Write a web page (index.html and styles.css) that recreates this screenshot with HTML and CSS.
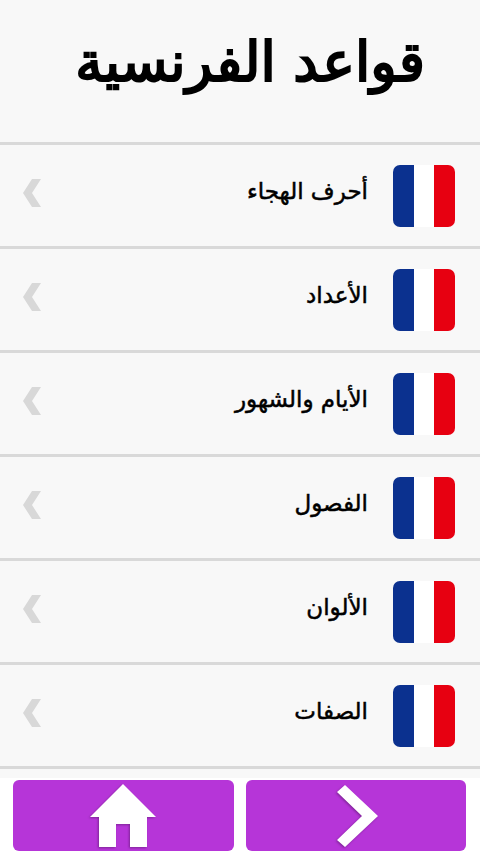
FILE: index.html
```
<!DOCTYPE html>
<html lang="ar" dir="rtl">
<head>
<meta charset="UTF-8">
<meta name="viewport" content="width=device-width, initial-scale=1.0">
<title>قواعد الفرنسية</title>
<link rel="stylesheet" href="styles.css">
</head>
<body>

<h1 class="title">قواعد الفرنسية</h1>

<ul class="lessons">
  <li class="lesson">
    <span class="flag"></span>
    <span class="name">أحرف الهجاء</span>
    <svg class="arrow" viewBox="0 0 18 28"><path d="M9 0H18L9 14L18 28H9L0 14Z"/></svg>
  </li>
  <li class="lesson">
    <span class="flag"></span>
    <span class="name">الأعداد</span>
    <svg class="arrow" viewBox="0 0 18 28"><path d="M9 0H18L9 14L18 28H9L0 14Z"/></svg>
  </li>
  <li class="lesson">
    <span class="flag"></span>
    <span class="name">الأيام والشهور</span>
    <svg class="arrow" viewBox="0 0 18 28"><path d="M9 0H18L9 14L18 28H9L0 14Z"/></svg>
  </li>
  <li class="lesson">
    <span class="flag"></span>
    <span class="name">الفصول</span>
    <svg class="arrow" viewBox="0 0 18 28"><path d="M9 0H18L9 14L18 28H9L0 14Z"/></svg>
  </li>
  <li class="lesson">
    <span class="flag"></span>
    <span class="name">الألوان</span>
    <svg class="arrow" viewBox="0 0 18 28"><path d="M9 0H18L9 14L18 28H9L0 14Z"/></svg>
  </li>
  <li class="lesson">
    <span class="flag"></span>
    <span class="name">الصفات</span>
    <svg class="arrow" viewBox="0 0 18 28"><path d="M9 0H18L9 14L18 28H9L0 14Z"/></svg>
  </li>
</ul>

<div class="toolbar">
  <button class="btn" aria-label="التالي">
    <svg width="45" height="64" viewBox="-4 0 45 64"><path d="M8 1L41 32L8 63L0 56L25 32L0 8Z"/></svg>
  </button>
  <button class="btn" aria-label="الرئيسية">
    <svg width="66" height="64" viewBox="0 0 66 64"><path d="M33 0L66 33H57V63H40V40H26V63H9V33H0Z"/></svg>
  </button>
</div>

</body>
</html>
```
FILE: styles.css
```
body {
  margin: 0;
  height: 853px;
  overflow: hidden;
  display: flex;
  flex-direction: column;
  background-color: #fff;
  color: #000;
  font-family: "DejaVu Sans", sans-serif;
}
.title {
  box-sizing: border-box;
  height: 142px;
  margin: 0;
  padding: 20px 55px 0 0;
  background-color: #f8f8f8;
  font-size: 55px;
  font-weight: normal;
  line-height: 84px;
  white-space: nowrap;
  -webkit-text-stroke: 2.2px #000;
}
.lessons {
  box-sizing: border-box;
  height: 636px;
  margin: 0;
  padding: 0 0 9px;
  list-style: none;
  background-color: #f8f8f8;
}
.lesson {
  box-sizing: border-box;
  display: flex;
  align-items: center;
  height: 104px;
  padding: 0 25px 0 23px;
  border-top: 3px solid #d9d9d9;
}
.lesson:last-child {
  height: 107px;
  border-bottom: 3px solid #d9d9d9;
}
.flag {
  width: 62px;
  height: 62px;
  border-radius: 7px;
  background: linear-gradient(to right, #0b318f 0 21px, #fff 21px 41px, #e70011 41px);
}
.name {
  flex: 1;
  margin-right: 25px;
  padding-bottom: 9px;
  font-size: 23px;
  -webkit-text-stroke: 0.5px #000;
}
.arrow {
  width: 18px;
  height: 28px;
  margin-bottom: 5px;
  fill: #d8d8d8;
}
.toolbar {
  display: flex;
  gap: 12px;
  padding: 2px 14px 2px 13px;
}
.btn {
  flex: 1;
  height: 71px;
  padding: 0;
  border: none;
  border-radius: 6px;
  background-color: #b635d8;
  fill: #fff;
}
.btn svg {
  display: block;
  margin: 0 auto;
  filter: drop-shadow(-1px 1px 1px rgba(0, 0, 0, 0.3));
}
```
